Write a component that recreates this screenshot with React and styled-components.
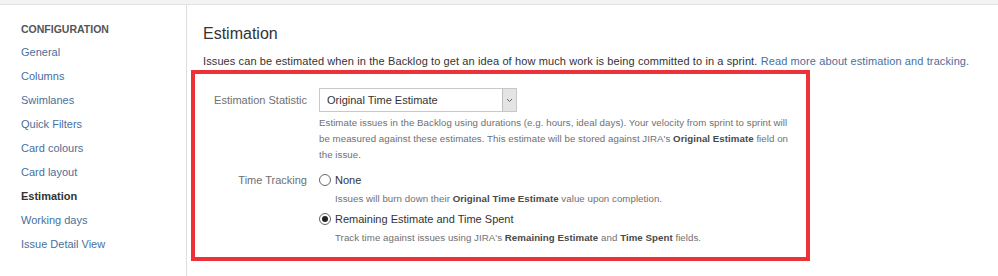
import styled, { createGlobalStyle } from "styled-components";

const GlobalStyle = createGlobalStyle`
  body {
    margin: 0;
    background: #fff;
    font-family: "Liberation Sans", Arial, sans-serif;
    color: #333;
  }
`;

const TopStrip = styled.div`
  height: 4px;
  background: #f3f3f3;
  border-bottom: 1px solid #e2e2e2;
`;

const Layout = styled.div`
  display: flex;
  min-height: 271px;
`;

const Sidebar = styled.nav`
  width: 165px;
  flex-shrink: 0;
  padding: 16px 0 0 21px;
  border-right: 1px solid #dedede;
`;

const SideHeading = styled.h3`
  margin: 0 0 3px;
  font-size: 10.5px;
  line-height: 16px;
  font-weight: bold;
  text-transform: uppercase;
  color: #555;
`;

const NavList = styled.ul`
  list-style: none;
  margin: 0;
  padding: 0;
`;

const NavItem = styled.li`
  font-size: 11px;
  line-height: 24px;
  color: ${({ $active }) => ($active ? "#333" : "#4a6f9c")};
  font-weight: ${({ $active }) => ($active ? "bold" : "normal")};
`;

const Main = styled.main`
  flex: 1;
  padding: 19px 0 0 16px;
`;

const Title = styled.h2`
  margin: 0 0 9px;
  font-size: 16px;
  line-height: 20px;
  font-weight: normal;
  color: #333;
`;

const Intro = styled.p`
  margin: 0;
  font-size: 11px;
  line-height: 16px;
  letter-spacing: 0.11px;
  color: #333;
`;

const Link = styled.a`
  color: #4a6f9c;
  text-decoration: none;
`;

const Highlight = styled.section`
  width: 611px;
  margin: 1px 0 0 -12px;
  border: 4px solid #ec3238;
  padding: 14px 0 11px;
  display: flex;
  flex-direction: column;
  gap: 8px;
`;

const FieldRow = styled.div`
  display: grid;
  grid-template-columns: 112px 1fr;
  column-gap: 12px;
  align-items: start;
`;

const Label = styled.div`
  text-align: right;
  font-size: 11px;
  line-height: ${({ $h }) => $h}px;
  color: #707070;
`;

const Field = styled.div`
  display: flex;
  flex-direction: column;
`;

const Select = styled.div`
  width: 196px;
  height: 22px;
  border: 1px solid #c8c8c8;
  display: flex;
  align-items: center;
  font-size: 11px;
  color: #333;
`;

const SelectText = styled.span`
  flex: 1;
  padding-left: 7px;
`;

const SelectArrow = styled.span`
  width: 13px;
  height: 100%;
  background: #e4e4e4;
  border-left: 1px solid #bdbdbd;
  display: flex;
  align-items: center;
  justify-content: center;
`;

const Help = styled.div`
  margin-top: ${({ $top }) => $top || 0}px;
  padding-left: ${({ $indent }) => $indent || 0}px;
  width: ${({ $w }) => $w || "auto"};
  font-size: 9.7px;
  line-height: 16px;
  letter-spacing: 0.05px;
  color: #707070;

  b {
    color: #4a4a4a;
  }
`;

const RadioRow = styled.label`
  display: flex;
  align-items: center;
  gap: 4px;
  height: 18px;
  margin-top: ${({ $top }) => $top || 0}px;
  font-size: 11px;
  color: #333;
`;

const RadioDot = styled.span`
  width: 10px;
  height: 10px;
  border: 1px solid #666;
  border-radius: 50%;
  display: flex;
  align-items: center;
  justify-content: center;

  &::after {
    content: "";
    width: 6px;
    height: 6px;
    border-radius: 50%;
    background: ${({ $on }) => ($on ? "#222" : "transparent")};
  }
`;

const navItems = [
  "General",
  "Columns",
  "Swimlanes",
  "Quick Filters",
  "Card colours",
  "Card layout",
  "Estimation",
  "Working days",
  "Issue Detail View",
];

export default function App() {
  return (
    <>
      <GlobalStyle />
      <TopStrip />
      <Layout>
        <Sidebar>
          <SideHeading>Configuration</SideHeading>
          <NavList>
            {navItems.map((item) => (
              <NavItem key={item} $active={item === "Estimation"}>
                {item}
              </NavItem>
            ))}
          </NavList>
        </Sidebar>
        <Main>
          <Title>Estimation</Title>
          <Intro>
            Issues can be estimated when in the Backlog to get an idea of how much work is being
            committed to in a sprint.{" "}
            <Link href="#">Read more about estimation and tracking.</Link>
          </Intro>
          <Highlight>
            <FieldRow>
              <Label $h={24}>Estimation Statistic</Label>
              <Field>
                <Select>
                  <SelectText>Original Time Estimate</SelectText>
                  <SelectArrow>
                    <svg width="7" height="5" viewBox="0 0 7 5">
                      <path d="M1 1l2.5 2.5L6 1" fill="none" stroke="#666" strokeWidth="1" />
                    </svg>
                  </SelectArrow>
                </Select>
                <Help $top={3} $w="475px">
                  Estimate issues in the Backlog using durations (e.g. hours, ideal days). Your
                  velocity from sprint to sprint will be measured against these estimates. This
                  estimate will be stored against JIRA's <b>Original Estimate</b> field on the
                  issue.
                </Help>
              </Field>
            </FieldRow>
            <FieldRow>
              <Label $h={18}>Time Tracking</Label>
              <Field>
                <RadioRow>
                  <RadioDot />
                  None
                </RadioRow>
                <Help $top={2} $indent={16}>
                  Issues will burn down their <b>Original Time Estimate</b> value upon completion.
                </Help>
                <RadioRow $top={3}>
                  <RadioDot $on />
                  Remaining Estimate and Time Spent
                </RadioRow>
                <Help $top={2} $indent={16}>
                  Track time against issues using JIRA's <b>Remaining Estimate</b> and{" "}
                  <b>Time Spent</b> fields.
                </Help>
              </Field>
            </FieldRow>
          </Highlight>
        </Main>
      </Layout>
    </>
  );
}
